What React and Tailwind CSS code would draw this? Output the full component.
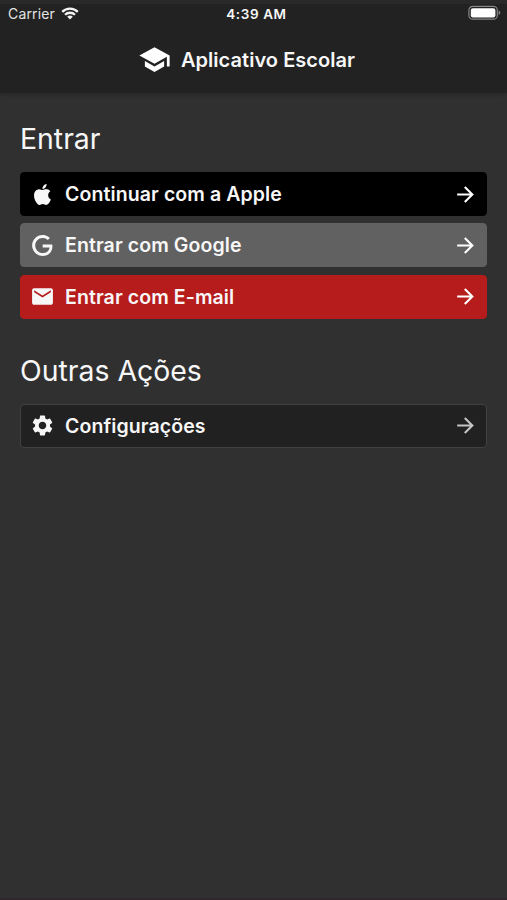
import { MdArrowForward, MdEmail, MdSchool, MdSettings } from "react-icons/md";

const AppleIcon = ({ className }) => (
  <svg viewBox="0 0 24 24" fill="currentColor" className={className}>
    <path d="M18.71,19.5C17.88,20.74 17,21.95 15.66,21.97C14.32,22 13.89,21.18 12.37,21.18C10.84,21.18 10.37,21.95 9.1,22C7.79,22.05 6.8,20.68 5.96,19.47C4.25,17 2.94,12.45 4.7,9.39C5.57,7.87 7.13,6.91 8.82,6.88C10.1,6.86 11.32,7.75 12.11,7.75C12.89,7.75 14.37,6.68 15.92,6.84C16.57,6.87 18.39,7.1 19.56,8.82C19.47,8.88 17.39,10.1 17.41,12.63C17.44,15.65 20.06,16.66 20.09,16.67C20.06,16.74 19.67,18.11 18.71,19.5M13,3.5C13.73,2.67 14.94,2.04 15.94,2C16.07,3.17 15.6,4.35 14.9,5.19C14.21,6.04 13.07,6.7 11.95,6.61C11.8,5.46 12.36,4.26 13,3.5Z" />
  </svg>
);

const GoogleIcon = ({ className }) => (
  <svg viewBox="0 0 24 24" fill="currentColor" className={className}>
    <path d="M21.35,11.1H12.18V13.83H18.69C18.36,17.64 15.19,19.27 12.19,19.27C8.36,19.27 5,16.25 5,12C5,7.9 8.2,4.73 12.2,4.73C15.29,4.73 17.1,6.7 17.1,6.7L19,4.72C19,4.72 16.56,2 12.1,2C6.42,2 2.03,6.8 2.03,12C2.03,17.05 6.16,22 12.25,22C17.6,22 21.5,18.33 21.5,12.91C21.5,11.76 21.35,11.1 21.35,11.1V11.1Z" />
  </svg>
);

const WifiIcon = () => (
  <svg viewBox="0 0 18 13" className="w-[18px] h-[13px] -mt-[2px]" fill="none" stroke="#f4f4f4" strokeWidth="2.3">
    <path d="M1.2 4.9a11 11 0 0 1 15.6 0" />
    <path d="M4 7.8a7.1 7.1 0 0 1 10 0" />
    <path d="M9 12.6 6.2 9.8a4 4 0 0 1 5.6 0z" fill="#f4f4f4" stroke="none" />
  </svg>
);

const BatteryIcon = () => (
  <svg viewBox="0 0 33 16" className="w-[33px] h-4 -mt-[2px]">
    <rect x="0.9" y="1.4" width="28.4" height="12.8" rx="3.8" fill="none" stroke="#858585" strokeWidth="1.2" />
    <rect x="2.8" y="3.2" width="24.6" height="9.2" rx="2.2" fill="#fff" />
    <path d="M30.6 5.6c1.2.5 1.7 1.2 1.7 2.2s-.5 1.7-1.7 2.2z" fill="#858585" />
  </svg>
);

const ActionButton = ({ icon: Icon, label, className, arrow = "text-white" }) => (
  <button className={`flex items-center w-full h-11 pl-[9px] pr-[8px] rounded border text-left ${className}`}>
    <Icon className="w-[25px] h-[25px] shrink-0" />
    <span className="flex-1 ml-[10px] text-[19.5px] leading-6 font-semibold tracking-[0.1px] whitespace-nowrap">
      {label}
    </span>
    <MdArrowForward className={`w-[25px] h-[25px] shrink-0 ${arrow}`} />
  </button>
);

const App = () => {
  return (
    <div className="flex flex-col w-full h-[900px] overflow-hidden bg-[#303030] border-b-2 border-[#2d272b] text-[#f7f7f7] font-['Inter','Liberation_Sans',sans-serif]">
      <header className="h-[93px] shrink-0 bg-[#222222] border-t-4 border-[#292929] shadow-[0_1px_5px_rgba(0,0,0,0.28)]">
        <div className="grid grid-cols-3 items-center h-5 pl-[8px] pr-[6px] text-[14px] leading-5">
          <div className="flex items-center gap-[6px] text-[#e4e4e4]">
            <span className="tracking-[0.15px]">Carrier</span>
            <WifiIcon />
          </div>
          <span className="pl-[4px] text-center font-semibold text-[13.5px] tracking-[0.6px]">4:39 AM</span>
          <div className="flex justify-end">
            <BatteryIcon />
          </div>
        </div>
        <div className="flex items-center justify-center h-[71px] pr-[14px]">
          <MdSchool className="w-[33px] h-[33px] text-white" />
          <h1 className="ml-[10px] text-[20px] leading-6 font-semibold tracking-[0.05px]">Aplicativo Escolar</h1>
        </div>
      </header>

      <main className="px-5 pt-[28px]">
        <h2 className="text-[28.4px] leading-9">Entrar</h2>
        <div className="flex flex-col gap-[7.4px] mt-[15px]">
          <ActionButton icon={AppleIcon} label="Continuar com a Apple" className="bg-black border-black" />
          <ActionButton icon={GoogleIcon} label="Entrar com Google" className="bg-[#616161] border-[#616161]" />
          <ActionButton icon={MdEmail} label="Entrar com E-mail" className="bg-[#b71c1c] border-[#b71c1c]" />
        </div>

        <h2 className="mt-[34px] text-[28.4px] leading-9">Outras Ações</h2>
        <div className="mt-[15px]">
          <ActionButton
            icon={MdSettings}
            label="Configurações"
            className="bg-[#212121] border-[#414141]"
            arrow="text-[#c4c4c4]"
          />
        </div>
      </main>
    </div>
  );
};

export default App;
